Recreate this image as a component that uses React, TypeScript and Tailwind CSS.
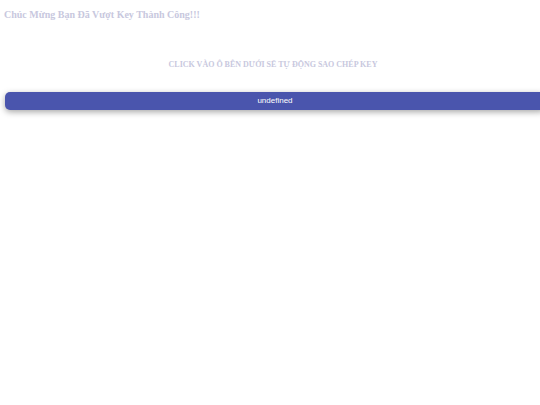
export default function App() {
  return (
    <div className="w-[540px] h-[405px] bg-white overflow-hidden" style={{ fontFamily: '"Liberation Serif", serif' }}>
      <div className="pt-[8px] pl-[4px] text-[10px] font-bold text-[#c8c8de] leading-[13px]">
        Chúc Mừng Bạn Đã Vượt Key Thành Công!!!
      </div>
      <div className="mt-[39px] text-center text-[8px] font-bold text-[#c8c8de] leading-[10px] uppercase pl-[6px]">
        CLICK VÀO Ô BÊN DƯỚI SẼ TỰ ĐỘNG SAO CHÉP KEY
      </div>
      <div className="mt-[22px] pl-[5px]">
        <div
          className="w-[540px] h-[18px] rounded-[5px] bg-[#4a55ad] shadow-[0_2px_6px_rgba(0,0,0,0.35)] flex items-center justify-center text-[8px] text-white"
          style={{ fontFamily: '"Liberation Sans", Arial, sans-serif' }}
        >
          undefined
        </div>
      </div>
    </div>
  );
}
